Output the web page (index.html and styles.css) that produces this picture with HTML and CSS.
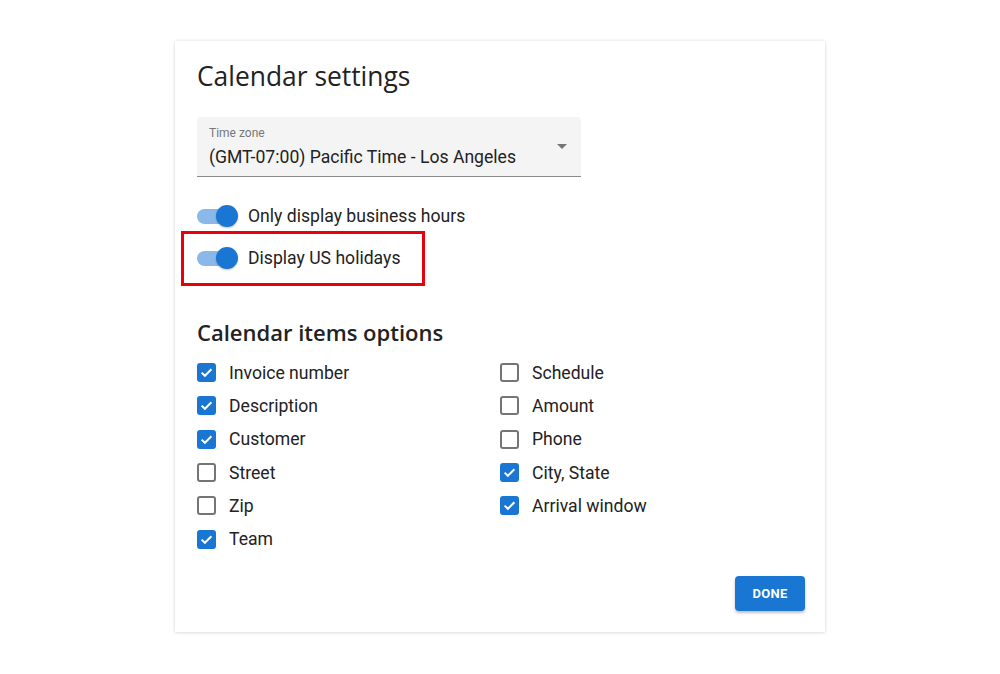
FILE: index.html
```html
<!DOCTYPE html>
<html>
<head>
<meta charset="utf-8">
<link rel="stylesheet" href="styles.css">
</head>
<body>
<div class="card">
  <h1 class="title">Calendar settings</h1>
  <div class="select">
    <div class="select-label">Time zone</div>
    <div class="select-value">(GMT-07:00) Pacific Time - Los Angeles</div>
    <svg class="arrow" width="10" height="5" viewBox="0 0 10 5"><path d="M0 0 L10 0 L5 5 Z" fill="#757575"/></svg>
  </div>
  <div class="switches">
    <div class="switch-row">
      <span class="switch"><span class="track"></span><span class="thumb"></span></span>
      <span class="switch-label">Only display business hours</span>
    </div>
    <div class="switch-row highlighted">
      <span class="switch"><span class="track"></span><span class="thumb"></span></span>
      <span class="switch-label">Display US holidays</span>
    </div>
  </div>
  <h2 class="subtitle">Calendar items options</h2>
  <div class="options">
    <div class="col">
      <label class="opt"><span class="cb on"><svg viewBox="0 0 15 15"><path d="M2.6 7.6 L5.9 10.8 L12.4 4.3" fill="none" stroke="#fff" stroke-width="2"/></svg></span>Invoice number</label>
      <label class="opt"><span class="cb on"><svg viewBox="0 0 15 15"><path d="M2.6 7.6 L5.9 10.8 L12.4 4.3" fill="none" stroke="#fff" stroke-width="2"/></svg></span>Description</label>
      <label class="opt"><span class="cb on"><svg viewBox="0 0 15 15"><path d="M2.6 7.6 L5.9 10.8 L12.4 4.3" fill="none" stroke="#fff" stroke-width="2"/></svg></span>Customer</label>
      <label class="opt"><span class="cb"></span>Street</label>
      <label class="opt"><span class="cb"></span>Zip</label>
      <label class="opt"><span class="cb on"><svg viewBox="0 0 15 15"><path d="M2.6 7.6 L5.9 10.8 L12.4 4.3" fill="none" stroke="#fff" stroke-width="2"/></svg></span>Team</label>
    </div>
    <div class="col">
      <label class="opt"><span class="cb"></span>Schedule</label>
      <label class="opt"><span class="cb"></span>Amount</label>
      <label class="opt"><span class="cb"></span>Phone</label>
      <label class="opt"><span class="cb on"><svg viewBox="0 0 15 15"><path d="M2.6 7.6 L5.9 10.8 L12.4 4.3" fill="none" stroke="#fff" stroke-width="2"/></svg></span>City, State</label>
      <label class="opt"><span class="cb on"><svg viewBox="0 0 15 15"><path d="M2.6 7.6 L5.9 10.8 L12.4 4.3" fill="none" stroke="#fff" stroke-width="2"/></svg></span>Arrival window</label>
    </div>
  </div>
  <div class="actions">
    <button class="done">DONE</button>
  </div>
</div>
</body>
</html>
```

FILE: styles.css
```css
html, body {
  margin: 0;
  padding: 0;
  background: #fff;
}
body {
  font-family: Roboto, "Liberation Sans", sans-serif;
  color: #222;
  padding-top: 41px;
  height: 674px;
  box-sizing: border-box;
}
.card {
  width: 650px;
  height: 591px;
  margin-left: 175px;
  box-sizing: border-box;
  background: #fff;
  box-shadow: 0 0 3px rgba(0,0,0,0.12), 0 1px 4px rgba(0,0,0,0.08);
  padding: 17px 22px 0 22px;
  display: flex;
  flex-direction: column;
}
.title {
  margin: 0;
  font-family: "Open Sans", sans-serif;
  font-weight: 400;
  font-size: 26.4px;
  line-height: 36px;
  color: #222;
}
.select {
  position: relative;
  margin-top: 23px;
  width: 384px;
  height: 60px;
  box-sizing: border-box;
  background: #f4f4f4;
  border-radius: 4px 4px 0 0;
  border-bottom: 1px solid #8a8a8a;
  padding: 9px 12px 0 12px;
}
.select-label {
  font-size: 12px;
  line-height: 14px;
  color: #777;
}
.select-value {
  font-size: 17.6px;
  line-height: 26px;
  color: #222;
  margin-top: 4px;
}
.arrow {
  position: absolute;
  right: 14px;
  top: 27px;
}
.switches {
  margin-top: 27px;
  display: flex;
  flex-direction: column;
  gap: 18px;
}
.switch-row {
  display: flex;
  align-items: center;
  height: 24px;
  position: relative;
}
.switch-row.highlighted::after {
  content: "";
  position: absolute;
  left: -16px;
  top: -15px;
  width: 244px;
  height: 55px;
  border: 3px solid #e8000b;
  box-sizing: border-box;
}
.switch {
  position: relative;
  width: 42px;
  height: 24px;
  display: inline-block;
  margin-right: 9px;
}
.track {
  position: absolute;
  left: 0;
  top: 5px;
  width: 38px;
  height: 15px;
  border-radius: 8px;
  background: #8ab8e8;
}
.thumb {
  position: absolute;
  left: 19px;
  top: 1px;
  width: 22px;
  height: 22px;
  border-radius: 50%;
  background: #1976d2;
  box-shadow: 0 1px 2px rgba(0,0,0,0.25);
}
.switch-label {
  font-size: 17.6px;
  color: #222;
}
.subtitle {
  margin: 47px 0 0 0;
  font-family: "Open Sans", sans-serif;
  font-weight: 600;
  font-size: 22px;
  line-height: 30px;
  color: #222;
}
.options {
  margin-top: 9px;
  display: flex;
}
.col {
  width: 305px;
  display: flex;
  flex-direction: column;
}
.opt {
  display: flex;
  align-items: center;
  height: 33.3px;
  font-size: 17.6px;
  color: #222;
}
.cb {
  width: 19px;
  height: 19px;
  box-sizing: border-box;
  border: 2px solid #757575;
  border-radius: 3px;
  margin-right: 13px;
  display: inline-flex;
}
.cb.on {
  background: #1976d2;
  border-color: #1976d2;
}
.cb svg {
  width: 15px;
  height: 15px;
}
.actions {
  margin-top: auto;
  margin-bottom: 21px;
  display: flex;
  justify-content: flex-end;
}
.done {
  width: 70px;
  height: 35px;
  background: #1976d2;
  color: #fff;
  border: none;
  border-radius: 4px;
  font-family: Roboto, sans-serif;
  font-weight: 700;
  font-size: 13px;
  letter-spacing: 0.3px;
  box-shadow: 0 2px 3px rgba(0,0,0,0.25);
  margin-right: -2px;
}
```
